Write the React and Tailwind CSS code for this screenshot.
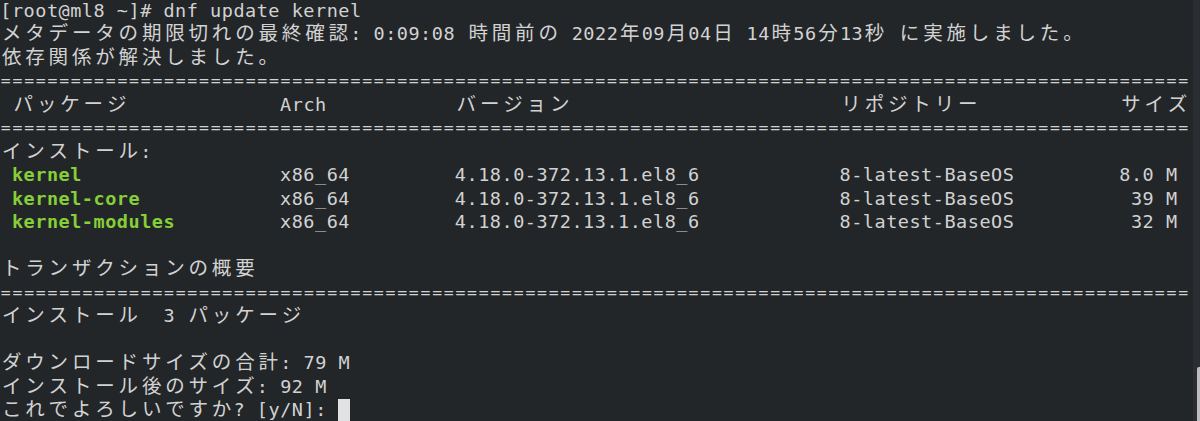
import React from 'react';

// terminal grid: 102 columns x 18 rows
const CJK = /[\u3000-\u30ff\u4e00-\u9fff\uff00-\uffef]/;

const cellWidth = (s) => [...s].reduce((n, ch) => n + (CJK.test(ch) ? 2 : 1), 0);

// build a line from [col, text, green?] items, padding with spaces
function row(items) {
  const segs = [];
  let col = 0;
  items.forEach(([at, text, green]) => {
    if (at > col) segs.push({ t: ' '.repeat(at - col) });
    segs.push({ t: text, green });
    col = Math.max(col, at) + cellWidth(text);
  });
  return segs;
}

const rule = [{ t: '='.repeat(102), rule: true }];

const lines = [
  [{ t: '[root@ml8 ~]# dnf update kernel' }],
  [{ t: 'メタデータの期限切れの最終確認: 0:09:08 時間前の 2022年09月04日 14時56分13秒 に実施しました。' }],
  [{ t: '依存関係が解決しました。' }],
  rule,
  row([[1, 'パッケージ'], [24, 'Arch'], [39, 'バージョン'], [72, 'リポジトリー'], [96, 'サイズ']]),
  rule,
  [{ t: 'インストール:' }],
  row([[1, 'kernel', true], [24, 'x86_64'], [39, '4.18.0-372.13.1.el8_6'], [72, '8-latest-BaseOS'], [96, '8.0 M']]),
  row([[1, 'kernel-core', true], [24, 'x86_64'], [39, '4.18.0-372.13.1.el8_6'], [72, '8-latest-BaseOS'], [97, '39 M']]),
  row([[1, 'kernel-modules', true], [24, 'x86_64'], [39, '4.18.0-372.13.1.el8_6'], [72, '8-latest-BaseOS'], [97, '32 M']]),
  [],
  [{ t: 'トランザクションの概要' }],
  rule,
  [{ t: 'インストール  3 パッケージ' }],
  [],
  [{ t: 'ダウンロードサイズの合計: 79 M' }],
  [{ t: 'インストール後のサイズ: 92 M' }],
  [{ t: 'これでよろしいですか? [y/N]: ' }],
];

function Cells({ text, green, rule }) {
  return [...text].map((ch, i) => {
    const wide = CJK.test(ch);
    return (
      <span
        key={i}
        className={`inline-block shrink-0 whitespace-pre text-center ${
          wide ? 'w-[23.34px] text-[19.5px]' : 'w-[11.67px]'
        } ${green ? 'font-bold text-[#86cf38]' : ''} ${rule ? 'text-[16.5px]' : ''}`}
      >
        {ch}
      </span>
    );
  });
}

function Line({ segs, cursor }) {
  return (
    <div className="flex h-[23.5px] items-center leading-[23.5px]">
      {segs.map((s, i) => (
        <Cells key={i} text={s.t} green={s.green} rule={s.rule} />
      ))}
      {cursor && <span className="inline-block h-[22px] w-[12px] shrink-0 bg-[#e2e2e2]" />}
    </div>
  );
}

export default function App() {
  return (
    <div className="flex h-[421px] w-[1200px] overflow-hidden bg-[#232629]">
      <div className="-mt-[1.5px] flex-1 font-['DejaVu_Sans_Mono','Noto_Sans_CJK_JP',monospace] text-[18.5px] text-[#d2d2d2]">
        {lines.map((segs, i) => (
          <Line key={i} segs={segs} cursor={i === lines.length - 1} />
        ))}
      </div>
      {/* scrollbar */}
      <div className="flex w-[7px] flex-col justify-end bg-[#2a2e32]">
        <div className="ml-[4px] h-[54px] w-[3px] rounded-tl-[2px] bg-[#bdbdbd]" />
      </div>
    </div>
  );
}
